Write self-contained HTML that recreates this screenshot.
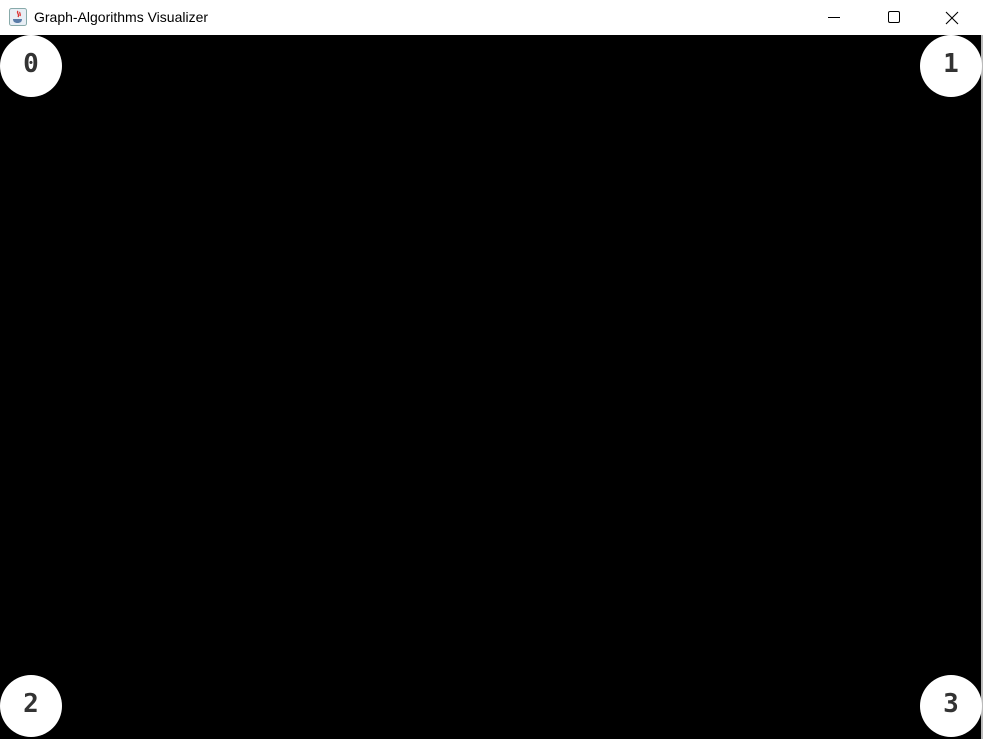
<!DOCTYPE html>
<html><head><style>
html,body{margin:0;padding:0;width:983px;height:739px;overflow:hidden;background:#fff;font-family:"Liberation Sans",sans-serif}
#tb{position:absolute;left:0;top:0;width:983px;height:35px;background:#fff}
#title{position:absolute;left:34px;top:9px;font-size:14px;color:#000}
#canvas{position:absolute;left:0;top:35px;width:981px;height:704px;background:#000}
#edge{position:absolute;left:981px;top:35px;width:2px;height:704px;background:#bbb}
.c{position:absolute;width:62px;height:62px;border-radius:50%;background:#fff;text-align:center;font:bold 26px "DejaVu Sans Mono","Liberation Mono",monospace;line-height:58px;color:#333}
</style></head><body>
<div id="tb">
<svg style="position:absolute;left:9px;top:8px" width="18" height="18" viewBox="0 0 18 18"><rect x="0.5" y="0.5" width="17" height="17" rx="2" fill="#e8eef5" stroke="#8aa"/><path d="M4 11h9c0 3-2 4-4.5 4S4 14 4 11z" fill="#5a7ca8"/><path d="M9 3c-2 2 2 3 0 6M11 4c-1 1 1 2 0 4" stroke="#d33" fill="none" stroke-width="1.3"/></svg>
<div id="title">Graph-Algorithms Visualizer</div>
<svg style="position:absolute;left:820px;top:10px" width="150" height="16"><line x1="8" y1="7.5" x2="20" y2="7.5" stroke="#000"/><rect x="68.5" y="1.5" width="11" height="11" rx="1.5" fill="none" stroke="#000"/><path d="M126 2l12 12M138 2l-12 12" stroke="#000" stroke-width="1.1"/></svg>
</div>
<div id="canvas"></div><div id="edge"></div>
<div class="c" style="left:0;top:35px">0</div>
<div class="c" style="left:920px;top:35px">1</div>
<div class="c" style="left:0;top:675px">2</div>
<div class="c" style="left:920px;top:675px">3</div>
</body></html>
